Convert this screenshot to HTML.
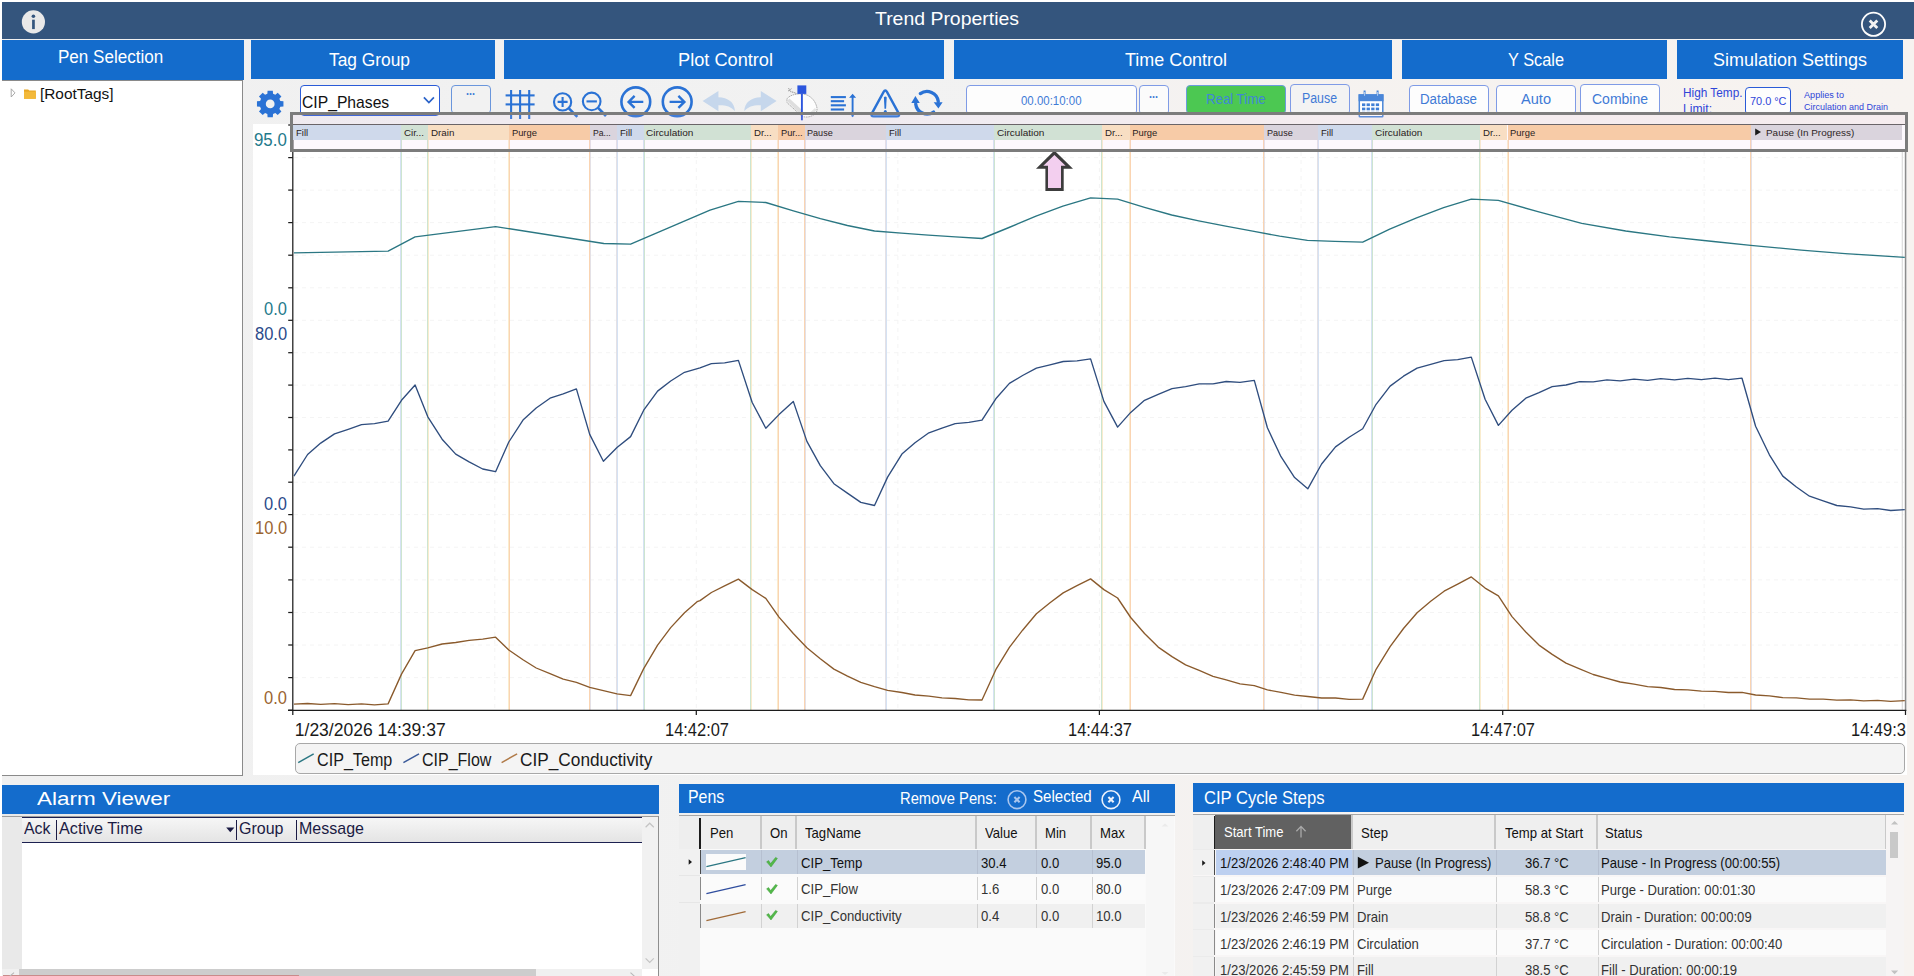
<!DOCTYPE html>
<html><head><meta charset="utf-8"><title>Trend Properties</title>
<style>
html,body{margin:0;padding:0;background:#fff;width:1914px;height:976px;overflow:hidden;}
#w{width:1914px;height:976px;position:relative;overflow:hidden;font-family:"Liberation Sans",sans-serif;background:#fff;}
.a{position:absolute;display:block;}
.t{position:absolute;white-space:pre;transform-origin:0 0;display:block;}
</style></head><body><div id="w">
<div class="a" style="left:2.00px;top:2.00px;width:1912.00px;height:974.00px;background:linear-gradient(to right,#f0f0f0 0%,#f2f2f2 55%,#f5f2f0 63%,#f7f3f0 100%);"></div>
<div class="a" style="left:2.00px;top:2.00px;width:1912.00px;height:36.60px;background:#34557d;"></div>
<span class="t" style="left:875.00px;top:9.84px;font-size:18.50px;line-height:18.50px;color:#fff;transform:scaleX(1.0503);">Trend Properties</span>
<svg class="a" style="left:20px;top:8px" width="28" height="28" viewBox="0 0 28 28"><circle cx="13.4" cy="13.9" r="11.6" fill="#e9e9e9"/><circle cx="13.4" cy="8.2" r="1.8" fill="#34557d"/><rect x="12.1" y="11.7" width="2.7" height="9.4" fill="#34557d"/></svg>
<svg class="a" style="left:1858px;top:9px" width="30" height="30" viewBox="0 0 30 30"><circle cx="15.5" cy="15.3" r="11.6" fill="none" stroke="#fdfdfd" stroke-width="1.8"/><path d="M11.7 11.5 L19.3 19.1 M19.3 11.5 L11.7 19.1" stroke="#f2f2f2" stroke-width="2.8" stroke-linecap="butt"/></svg>
<div class="a" style="left:2.00px;top:40.00px;width:242.00px;height:39.60px;background:#146ccc;"></div>
<span class="t" style="left:58.30px;top:49.49px;font-size:17.50px;line-height:17.50px;color:#fff;transform:scaleX(0.9742);">Pen Selection</span>
<div class="a" style="left:250.50px;top:40.20px;width:244.00px;height:39.10px;background:#146ccc;"></div>
<span class="t" style="left:328.50px;top:52.09px;font-size:17.50px;line-height:17.50px;color:#fff;transform:scaleX(0.9913);">Tag Group</span>
<div class="a" style="left:504.00px;top:40.20px;width:440.00px;height:39.10px;background:#146ccc;"></div>
<span class="t" style="left:678.00px;top:52.09px;font-size:17.50px;line-height:17.50px;color:#fff;transform:scaleX(1.0390);">Plot Control</span>
<div class="a" style="left:953.50px;top:40.20px;width:438.00px;height:39.10px;background:#146ccc;"></div>
<span class="t" style="left:1124.50px;top:52.09px;font-size:17.50px;line-height:17.50px;color:#fff;transform:scaleX(1.0250);">Time Control</span>
<div class="a" style="left:1401.50px;top:40.20px;width:265.00px;height:39.10px;background:#146ccc;"></div>
<span class="t" style="left:1507.50px;top:52.09px;font-size:17.50px;line-height:17.50px;color:#fff;transform:scaleX(0.9335);">Y Scale</span>
<div class="a" style="left:1676.50px;top:40.20px;width:226.00px;height:39.10px;background:#146ccc;"></div>
<span class="t" style="left:1712.50px;top:52.49px;font-size:17.50px;line-height:17.50px;color:#fff;transform:scaleX(1.0280);">Simulation Settings</span>
<div class="a" style="left:2.00px;top:79.80px;width:241.20px;height:696.70px;background:#fff;border-top:1.5px solid #8a8a8a;border-right:1.5px solid #8a8a8a;border-bottom:1.5px solid #8a8a8a;box-sizing:border-box;"></div>
<svg class="a" style="left:8px;top:86px" width="34" height="16" viewBox="0 0 34 16"><path d="M3.2 2.8 L7 6.9 L3.2 11 Z" fill="#fff" stroke="#a0a0a0" stroke-width="0.9"/><path d="M16 3.5 h4.2 l1 1 h6.6 v8.3 h-11.8 z" fill="#e8a623"/><path d="M16 5.6 h11.8 v7.2 h-11.8 z" fill="#f3b93a"/></svg>
<span class="t" style="left:40.00px;top:85.88px;font-size:15.50px;line-height:15.50px;color:#111;transform:scaleX(0.9919);">[RootTags]</span>
<div class="a" style="left:253.00px;top:124.00px;width:1654.00px;height:651.00px;background:#fff;"></div>
<svg class="a" style="left:0;top:0" width="1914" height="976" viewBox="0 0 1914 976"><g stroke="#f4f4f4" stroke-width="1" stroke-dasharray="4 4" fill="none"><path d="M294 157.6 H1904"/><path d="M294 190.1 H1904"/><path d="M294 222.6 H1904"/><path d="M294 255.2 H1904"/><path d="M294 287.8 H1904"/><path d="M294 320.3 H1904"/><path d="M294 352.7 H1904"/><path d="M294 385.1 H1904"/><path d="M294 417.5 H1904"/><path d="M294 449.9 H1904"/><path d="M294 482.2 H1904"/><path d="M294 514.6 H1904"/><path d="M294 547.2 H1904"/><path d="M294 579.9 H1904"/><path d="M294 612.5 H1904"/><path d="M294 645.0 H1904"/><path d="M294 677.6 H1904"/><path d="M494.8 152 V710"/><path d="M696.3 152 V710"/><path d="M897.9 152 V710"/><path d="M1099.4 152 V710"/><path d="M1301.0 152 V710"/><path d="M1502.5 152 V710"/><path d="M1704.1 152 V710"/></g><rect x="400" y="140" width="1" height="570" fill="#d5e2f3"/><rect x="401" y="140" width="1" height="570" fill="#cde5d0"/><rect x="427" y="140" width="1" height="570" fill="#cde5d0"/><rect x="428" y="140" width="1" height="570" fill="#faecce"/><rect x="508" y="140" width="1" height="570" fill="#faecce"/><rect x="509" y="140" width="1" height="570" fill="#fad4b2"/><rect x="589" y="140" width="1" height="570" fill="#fad4b2"/><rect x="590" y="140" width="1" height="570" fill="#e4e1e6"/><rect x="616" y="140" width="1" height="570" fill="#e4e1e6"/><rect x="617" y="140" width="1" height="570" fill="#d5e2f3"/><rect x="643" y="140" width="1" height="570" fill="#d5e2f3"/><rect x="644" y="140" width="1" height="570" fill="#cde5d0"/><rect x="750" y="140" width="1" height="570" fill="#cde5d0"/><rect x="751" y="140" width="1" height="570" fill="#faecce"/><rect x="777" y="140" width="1" height="570" fill="#faecce"/><rect x="778" y="140" width="1" height="570" fill="#fad4b2"/><rect x="804" y="140" width="1" height="570" fill="#fad4b2"/><rect x="805" y="140" width="1" height="570" fill="#e4e1e6"/><rect x="885" y="140" width="1" height="570" fill="#e4e1e6"/><rect x="886" y="140" width="1" height="570" fill="#d5e2f3"/><rect x="993" y="140" width="1" height="570" fill="#d5e2f3"/><rect x="994" y="140" width="1" height="570" fill="#cde5d0"/><rect x="1101" y="140" width="1" height="570" fill="#cde5d0"/><rect x="1102" y="140" width="1" height="570" fill="#faecce"/><rect x="1129" y="140" width="1" height="570" fill="#faecce"/><rect x="1130" y="140" width="1" height="570" fill="#fad4b2"/><rect x="1263" y="140" width="1" height="570" fill="#fad4b2"/><rect x="1264" y="140" width="1" height="570" fill="#e4e1e6"/><rect x="1317" y="140" width="1" height="570" fill="#e4e1e6"/><rect x="1318" y="140" width="1" height="570" fill="#d5e2f3"/><rect x="1371" y="140" width="1" height="570" fill="#d5e2f3"/><rect x="1372" y="140" width="1" height="570" fill="#cde5d0"/><rect x="1479" y="140" width="1" height="570" fill="#cde5d0"/><rect x="1480" y="140" width="1" height="570" fill="#faecce"/><rect x="1507" y="140" width="1" height="570" fill="#faecce"/><rect x="1508" y="140" width="1" height="570" fill="#fad4b2"/><rect x="1750" y="140" width="1" height="570" fill="#fad4b2"/><rect x="1751" y="140" width="1" height="570" fill="#e4e1e6"/><path d="M1902.3 152 V710" stroke="#dcdcdc" stroke-width="1.2"/><path d="M1905.6 150 V711" stroke="#8c8c8c" stroke-width="1.6"/><clipPath id="cp"><rect x="293.4" y="120" width="1612" height="595"/></clipPath><g clip-path="url(#cp)" fill="none" stroke-width="1.35" stroke-linejoin="round"><path stroke="#2b7783" d="M293.9 252.9 L388.1 251.2 L415.1 236.9 L495.6 226.6 L603.8 243.5 L630.6 244.2 L710.0 210.2 L738.4 201.4 L765.8 202.5 L793.4 210.8 L820.4 218.7 L847.4 225.5 L874.5 231.0 L901.4 233.2 L928.4 235.2 L955.4 236.9 L982.0 238.5 L1009.0 227.5 L1036.0 216.1 L1062.9 206.2 L1090.6 197.9 L1117.6 199.1 L1144.5 207.3 L1171.7 215.0 L1198.7 220.9 L1225.7 226.2 L1252.7 231.2 L1279.7 236.1 L1307.4 240.4 L1334.8 241.3 L1362.7 242.2 L1389.7 229.2 L1416.6 217.8 L1443.6 207.7 L1471.3 199.2 L1498.3 200.3 L1537.9 211.7 L1581.8 223.3 L1625.7 231.0 L1669.5 236.9 L1713.4 241.5 L1750.7 245.3 L1801.2 250.1 L1845.1 253.6 L1904.8 257.3"/><path stroke="#2f4d7e" d="M293.9 476.1 L307.6 454.5 L320.7 443.1 L334.5 433.9 L348.2 429.3 L361.5 424.7 L374.5 423.6 L388.1 421.2 L401.5 400.3 L415.1 385.0 L427.8 416.8 L442.1 439.2 L455.7 454.1 L469.1 461.8 L482.7 469.0 L495.6 471.7 L508.8 442.0 L523.0 420.1 L536.2 408.0 L550.0 398.2 L563.2 393.8 L576.4 388.9 L589.7 434.4 L603.4 461.3 L617.0 447.5 L630.6 436.6 L643.7 410.2 L657.6 391.1 L670.7 381.0 L684.5 372.3 L700.0 367.9 L711.4 363.7 L724.6 362.8 L738.4 360.4 L752.2 402.5 L765.8 428.2 L779.0 414.6 L793.3 401.4 L806.9 441.4 L820.3 465.7 L833.9 483.7 L847.0 492.9 L860.8 502.4 L874.5 505.5 L887.6 477.1 L901.9 454.1 L915.0 442.7 L928.9 432.8 L942.0 428.2 L955.2 423.6 L968.8 422.3 L982.0 420.1 L995.8 398.8 L1009.4 383.4 L1022.6 375.5 L1036.4 368.1 L1050.0 364.8 L1063.2 361.5 L1077.0 360.8 L1090.6 358.9 L1103.9 401.4 L1117.6 427.1 L1130.7 412.4 L1144.5 400.3 L1158.2 394.4 L1172.0 388.7 L1185.6 386.7 L1199.2 383.9 L1213.0 383.9 L1226.2 381.5 L1240.0 382.4 L1254.3 380.4 L1267.4 427.8 L1281.0 456.7 L1294.6 477.6 L1307.8 488.8 L1321.6 464.0 L1335.5 446.9 L1349.1 437.2 L1362.7 428.7 L1376.1 404.3 L1390.1 386.1 L1403.5 376.2 L1417.1 368.1 L1430.7 364.4 L1444.1 360.6 L1457.7 359.7 L1471.3 357.1 L1485.1 399.2 L1498.4 425.4 L1512.0 410.2 L1525.8 398.2 L1539.0 392.7 L1552.2 386.7 L1566.0 385.0 L1579.6 381.7 L1593.2 381.9 L1607.0 379.9 L1620.2 380.8 L1634.0 379.1 L1647.6 380.4 L1660.8 378.6 L1674.6 379.9 L1687.8 378.4 L1701.4 379.7 L1715.0 378.2 L1728.4 379.7 L1742.0 378.2 L1755.6 426.2 L1769.4 454.8 L1782.8 476.1 L1796.4 487.0 L1809.5 496.2 L1823.2 500.8 L1836.8 505.5 L1850.6 506.8 L1863.7 509.2 L1877.6 508.7 L1890.7 510.5 L1904.8 509.6"/><path stroke="#8a5a2c" d="M293.9 704.2 L307.6 703.5 L320.7 704.4 L334.5 703.7 L348.2 704.6 L361.5 703.9 L374.5 704.8 L388.1 703.9 L401.5 674.1 L415.1 650.6 L427.8 647.8 L442.1 644.0 L455.7 642.5 L469.1 640.3 L482.7 639.2 L495.6 637.2 L508.8 650.0 L523.0 659.8 L536.2 668.0 L550.0 673.7 L563.2 679.2 L576.4 682.4 L589.7 687.3 L603.4 690.6 L617.0 693.9 L630.6 695.6 L643.7 668.6 L657.6 645.1 L670.7 627.6 L684.5 612.7 L697.1 601.7 L700.0 600.6 L711.4 592.5 L724.6 585.9 L738.4 579.1 L752.2 589.6 L765.8 598.4 L779.0 617.1 L793.3 633.5 L806.9 647.8 L820.3 658.7 L833.9 669.1 L847.0 675.9 L860.8 682.4 L874.5 686.6 L887.6 690.3 L901.9 692.5 L915.0 695.0 L928.9 696.1 L942.0 697.8 L955.2 698.5 L968.8 699.8 L982.0 700.0 L995.8 669.7 L1009.4 647.3 L1022.6 630.2 L1036.4 613.8 L1050.0 602.8 L1063.2 592.9 L1077.0 585.7 L1090.6 578.9 L1103.9 589.6 L1117.6 598.0 L1130.7 617.5 L1144.5 633.5 L1158.2 647.1 L1172.0 656.6 L1185.6 664.9 L1199.2 670.4 L1213.0 676.3 L1226.2 679.8 L1240.0 683.8 L1254.3 685.7 L1267.4 689.9 L1281.0 692.3 L1294.6 695.2 L1307.8 696.5 L1321.6 698.0 L1335.5 698.0 L1349.1 699.3 L1362.7 699.1 L1376.1 669.3 L1390.1 646.7 L1403.5 628.5 L1417.1 612.7 L1430.7 601.3 L1444.1 591.2 L1457.7 584.1 L1471.3 576.9 L1485.1 588.1 L1498.4 595.8 L1512.0 616.6 L1525.8 632.0 L1539.0 645.1 L1552.2 654.4 L1566.0 663.1 L1579.6 668.8 L1593.2 674.5 L1607.0 678.3 L1620.2 682.0 L1634.0 684.2 L1647.6 686.6 L1660.8 687.5 L1674.6 689.5 L1687.8 689.9 L1701.4 691.2 L1715.0 691.4 L1728.4 692.5 L1742.0 692.3 L1755.6 695.0 L1769.4 695.8 L1782.8 697.6 L1796.4 697.8 L1809.5 699.1 L1823.2 699.1 L1836.8 700.2 L1850.6 699.8 L1863.7 700.9 L1877.6 700.4 L1890.7 701.3 L1904.8 700.7"/></g><g stroke="#1c1c1c" fill="none" stroke-width="1.25"><path d="M292.8 124 V715"/><path d="M288 710.45 H1906.2" stroke-width="1.2"/><path d="M288.2 125.0 H292.8"/><path d="M288.2 157.6 H292.8"/><path d="M288.2 190.1 H292.8"/><path d="M288.2 222.6 H292.8"/><path d="M288.2 255.2 H292.8"/><path d="M288.2 287.8 H292.8"/><path d="M288.2 320.3 H292.8"/><path d="M288.2 352.7 H292.8"/><path d="M288.2 385.1 H292.8"/><path d="M288.2 417.5 H292.8"/><path d="M288.2 449.9 H292.8"/><path d="M288.2 482.2 H292.8"/><path d="M288.2 514.6 H292.8"/><path d="M288.2 547.2 H292.8"/><path d="M288.2 579.9 H292.8"/><path d="M288.2 612.5 H292.8"/><path d="M288.2 645.0 H292.8"/><path d="M288.2 677.6 H292.8"/><path d="M288.2 710.2 H292.8"/><path d="M696.3 710 V715"/><path d="M1099.4 710 V715"/><path d="M1502.7 710 V715"/><path d="M1905.5 710 V715"/></g><path fill="#3c3c3c" d="M1054.4 150.4 L1073 168.8 H1063.7 V190.9 H1045.4 V168.8 H1036 Z"/><path fill="#f3cfef" d="M1054.4 154.9 L1065.6 165.8 H1061 V188 H1048 V165.8 H1043.3 Z"/></svg>
<span class="t" style="left:253.90px;top:131.26px;font-size:18.00px;line-height:18.00px;color:#1f7a8c;transform:scaleX(0.9362);">95.0</span>
<span class="t" style="left:264.00px;top:299.66px;font-size:18.00px;line-height:18.00px;color:#1f7a8c;transform:scaleX(0.9151);">0.0</span>
<span class="t" style="left:254.80px;top:324.56px;font-size:18.00px;line-height:18.00px;color:#2b4a8a;transform:scaleX(0.9162);">80.0</span>
<span class="t" style="left:264.00px;top:494.56px;font-size:18.00px;line-height:18.00px;color:#2b4a8a;transform:scaleX(0.9151);">0.0</span>
<span class="t" style="left:254.80px;top:518.66px;font-size:18.00px;line-height:18.00px;color:#9a6430;transform:scaleX(0.9162);">10.0</span>
<span class="t" style="left:264.00px;top:689.16px;font-size:18.00px;line-height:18.00px;color:#9a6430;transform:scaleX(0.9151);">0.0</span>
<span class="t" style="left:294.80px;top:721.59px;font-size:17.50px;line-height:17.50px;color:#1a1a1a;">1/23/2026 14:39:37</span>
<span class="t" style="left:664.50px;top:721.59px;font-size:17.50px;line-height:17.50px;color:#1a1a1a;transform:scaleX(0.9396);">14:42:07</span>
<span class="t" style="left:1067.60px;top:721.59px;font-size:17.50px;line-height:17.50px;color:#1a1a1a;transform:scaleX(0.9396);">14:44:37</span>
<span class="t" style="left:1470.70px;top:721.59px;font-size:17.50px;line-height:17.50px;color:#1a1a1a;transform:scaleX(0.9396);">14:47:07</span>
<div class="a" style="left:1840px;top:716px;width:65.5px;height:26px;overflow:hidden"><span class="t" style="left:10.50px;top:5.59px;font-size:17.50px;line-height:17.50px;color:#1a1a1a;transform:scaleX(0.9396);">14:49:37</span></div>
<div class="a" style="left:295.00px;top:742.70px;width:1610.00px;height:31.80px;background:#f4f4f4;border:1.2px solid #a8a8a8;border-radius:5px;box-sizing:border-box;"></div>
<svg class="a" style="left:295px;top:748px" width="240" height="20" viewBox="295 748 240 20"><path d="M298.2 762.6 L313.7 753.8" stroke="#2b7783" stroke-width="1.5"/><path d="M403.4 762.6 L419 753.8" stroke="#3a5a9a" stroke-width="1.5"/><path d="M501.6 762.6 L517.1 753.8" stroke="#b07a48" stroke-width="1.5"/></svg>
<span class="t" style="left:316.80px;top:751.59px;font-size:17.50px;line-height:17.50px;color:#1a1a1a;transform:scaleX(0.9217);">CIP_Temp</span>
<span class="t" style="left:421.80px;top:751.59px;font-size:17.50px;line-height:17.50px;color:#1a1a1a;transform:scaleX(0.9149);">CIP_Flow</span>
<span class="t" style="left:520.00px;top:751.59px;font-size:17.50px;line-height:17.50px;color:#1a1a1a;transform:scaleX(0.9857);">CIP_Conductivity</span>
<svg class="a" style="left:254px;top:88px" width="32" height="32" viewBox="254 88 32 32"><path fill-rule="evenodd" fill="#2a72d5" d="M267.35 93.79 L267.57 90.66 L272.83 90.66 L273.05 93.79 L275.33 94.74 L277.70 92.68 L281.42 96.40 L279.36 98.77 L280.31 101.05 L283.44 101.27 L283.44 106.53 L280.31 106.75 L279.36 109.03 L281.42 111.40 L277.70 115.12 L275.33 113.06 L273.05 114.01 L272.83 117.14 L267.57 117.14 L267.35 114.01 L265.07 113.06 L262.70 115.12 L258.98 111.40 L261.04 109.03 L260.09 106.75 L256.96 106.53 L256.96 101.27 L260.09 101.05 L261.04 98.77 L258.98 96.40 L262.70 92.68 L265.07 94.74Z M265.80 103.90 a4.40 4.40 0 1 0 8.80 0 a4.40 4.40 0 1 0 -8.80 0Z"/></svg>
<div class="a" style="left:300.00px;top:85.00px;width:140.00px;height:31.00px;background:#fff;border:1.5px solid #2a5bd7;border-radius:4px;box-sizing:border-box;"></div>
<span class="t" style="left:302.10px;top:93.71px;font-size:17.00px;line-height:17.00px;color:#111;transform:scaleX(0.9228);">CIP_Phases</span>
<svg class="a" style="left:420px;top:93px" width="18" height="14" viewBox="0 0 18 14"><path d="M3.9 4.4 L8.9 9.6 L13.9 4.4" fill="none" stroke="#2b63c9" stroke-width="1.7"/></svg>
<div class="a" style="left:451.00px;top:84.50px;width:39.50px;height:29.50px;background:#f2f2f2;border:1.3px solid #6a96dc;border-radius:4px;box-sizing:border-box;"></div>
<span class="t" style="left:465.50px;top:85.44px;font-size:12.00px;line-height:12.00px;color:#3f7ad6;font-weight:bold;transform:scaleX(0.8998);">...</span>
<svg class="a" style="left:495px;top:80px" width="460" height="45" viewBox="495 80 460 45"><g stroke="#2a72d5" fill="none" stroke-width="2.1"><path d="M511.1 90 V119"/><path d="M520.1 90 V119"/><path d="M529.2 90 V119"/><path d="M505.6 95.4 H534.6"/><path d="M505.6 104.4 H534.6"/></g><g stroke="#2a72d5" fill="none" stroke-width="2.1"><circle cx="562.6" cy="101.9" r="8.6"/><path d="M557.6 101.9 H567.6 M562.6 96.9 V106.9"/><path d="M568.9 108.3 L577.3 116.8" stroke-width="2.6"/></g><g stroke="#2a72d5" fill="none" stroke-width="2.1"><circle cx="591.7" cy="101.4" r="8.8"/><path d="M586.5 101.4 H596.9"/><path d="M598.1 107.8 L606 116" stroke-width="2.6"/></g><g stroke="#2a72d5" fill="none" stroke-width="2.6"><circle cx="635.8" cy="101.8" r="14.4"/><path d="M628.6 101.9 H643.3 M634.6 95.9 L628.6 101.9 L634.6 107.9" stroke-width="2.4"/></g><g stroke="#2a72d5" fill="none" stroke-width="2.6"><circle cx="677.2" cy="101.8" r="14.4"/><path d="M669.6 101.9 H684.4 M678.4 95.9 L684.4 101.9 L678.4 107.9" stroke-width="2.4"/></g><path fill="#c6d7ec" d="M702.6 101 L718.4 91 V97.2 C728 97.5 734.5 102 735 111.2 C731 106.4 726 105 718.4 105.2 V111.2 Z"/><path fill="#c6d7ec" d="M776.6 101 L760.8 91 V97.2 C751.2 97.5 744.7 102 744.2 111.2 C748.2 106.4 753.2 105 760.8 105.2 V111.2 Z"/><g><path d="M787 98.8 C790 94.8 797 93.4 803 94 C810 94.8 815.4 100.6 816.8 107.2 C817.4 110.4 816.8 112.6 814.6 114.2 C811.4 116.8 806.5 117.8 802.4 116.4 L799 113.6 L787 102.6 Z" fill="#fdfdfd" stroke="#8a8a8a" stroke-width="0.7" stroke-dasharray="1.6 0.7"/><path d="M787 101 L789.4 98.6 L802.6 110.6 L800.2 114.4 Z" fill="#dedede"/><path d="M810 112.5 L815 108 L816.4 110.2 L812 115 Z" fill="#e4e4e4"/><path d="M788.6 88.2 L790.4 91.6 C792.4 92 794.6 92.6 796.4 93.6 M788.2 91 L791.6 88.6" stroke="#666" fill="none" stroke-width="0.7" stroke-dasharray="1.2 0.6"/><rect x="797.4" y="85.4" width="8.9" height="8.5" fill="#2c56dd"/><path d="M801.9 93.8 V120.3" stroke="#2c56dd" stroke-width="1.9"/></g><g stroke="#2a72d5" fill="none" stroke-width="2.1"><path d="M830.8 97.1 H845.9"/><path d="M830.8 101.2 H844.1"/><path d="M830.8 105.3 H845.9"/><path d="M830.8 109.5 H844.1"/><path d="M852.6 96 V116.2" stroke-width="1.9"/></g><path fill="#2a72d5" d="M849.1 97.8 L852.6 93.7 L856.1 97.8 Z M851 115.4 L852.6 117.2 L854.2 115.4 Z"/><path fill="none" stroke="#2a72d5" stroke-width="2.4" d="M883.5 92.1 Q885.3 88.9 887.1 92.1 L898.7 113.4 Q900.1 116.4 896.8 116.4 H873.8 Q870.5 116.4 871.9 113.4 Z"/><path fill="#2a72d5" d="M883.9 97.2 Q885.3 96 886.7 97.2 L886.1 108.8 H884.5 Z"/><circle cx="885.3" cy="111.5" r="1.5" fill="#2a72d5"/><g stroke="#2a72d5" fill="none" stroke-width="3.3" stroke-linecap="round"><path d="M920.3 93.6 A11.4 11.4 0 0 1 938.3 101.5" /><path d="M933.6 112 A11.4 11.4 0 0 1 915.7 104"/></g><path fill="#2a72d5" d="M933.7 102.3 H942.6 L938.4 108.4 Z M911.3 102.9 H919.8 L915.4 96 Z"/></svg>
<div class="a" style="left:965.50px;top:84.50px;width:171.50px;height:30.50px;background:#fdfdfd;border:1.3px solid #7f9be6;border-radius:4px;box-sizing:border-box;"></div><span class="t" style="left:1021.00px;top:94.64px;font-size:12.00px;line-height:12.00px;color:#3f7ad6;transform:scaleX(0.9544);">00.00:10:00</span>
<div class="a" style="left:1139.00px;top:84.50px;width:29.50px;height:30.50px;background:#fbfbfb;border:1.3px solid #7f9be6;border-radius:4px;box-sizing:border-box;"></div>
<span class="t" style="left:1149.00px;top:88.44px;font-size:12.00px;line-height:12.00px;color:#3f7ad6;font-weight:bold;transform:scaleX(0.8998);">...</span>
<div class="a" style="left:1186.00px;top:84.50px;width:100.00px;height:29.50px;background:#4cc852;border:1.3px solid #6a9cdc;border-radius:4px;box-sizing:border-box;"></div><span class="t" style="left:1206.25px;top:92.13px;font-size:14.50px;line-height:14.50px;color:#3f86d8;transform:scaleX(0.9116);">Real Time</span>
<div class="a" style="left:1289.50px;top:84.00px;width:60.00px;height:30.80px;background:#f3f3f3;border:1.3px solid #7f9be6;border-radius:4px;box-sizing:border-box;"></div><span class="t" style="left:1302.00px;top:91.45px;font-size:14.00px;line-height:14.00px;color:#3f7ad6;transform:scaleX(0.8816);">Pause</span>
<svg class="a" style="left:1356px;top:88px" width="30" height="32" viewBox="1356 88 30 32"><path d="M1359.3 95 H1382.8 V116.2 Q1382.8 116.8 1382.2 116.8 H1359.9 Q1359.3 116.8 1359.3 116.2 Z" fill="#fff" stroke="#4a86d8" stroke-width="1.5"/><path d="M1358.6 94.3 H1383.5 V101.2 H1358.6 Z" fill="#4a86d8"/><path d="M1364.6 90.6 V96.6 M1377.6 90.6 V96.6" stroke="#4a86d8" stroke-width="2" /><path d="M1364.6 92 V95.8 M1377.6 92 V95.8" stroke="#fff" stroke-width="0.6"/><rect x="1362.0" y="103.4" width="3.3" height="2.7" fill="#3f7fd6"/><rect x="1366.6" y="103.4" width="3.3" height="2.7" fill="#3f7fd6"/><rect x="1371.2" y="103.4" width="3.3" height="2.7" fill="#3f7fd6"/><rect x="1375.8" y="103.4" width="3.3" height="2.7" fill="#3f7fd6"/><rect x="1362.0" y="107.6" width="3.3" height="2.7" fill="#3f7fd6"/><rect x="1366.6" y="107.6" width="3.3" height="2.7" fill="#3f7fd6"/><rect x="1371.2" y="107.6" width="3.3" height="2.7" fill="#3f7fd6"/><rect x="1375.8" y="107.6" width="3.3" height="2.7" fill="#3f7fd6"/><rect x="1362.0" y="111.8" width="3.3" height="2.7" fill="#3f7fd6"/><rect x="1366.6" y="111.8" width="3.3" height="2.7" fill="#3f7fd6"/><rect x="1371.2" y="111.8" width="3.3" height="2.7" fill="#3f7fd6"/><rect x="1375.8" y="111.8" width="3.3" height="2.7" fill="#3f7fd6"/></svg>
<div class="a" style="left:1408.50px;top:85.00px;width:80.00px;height:30.00px;background:#fdfdfd;border:1.3px solid #7f9be6;border-radius:4px;box-sizing:border-box;"></div><span class="t" style="left:1420.00px;top:91.75px;font-size:14.00px;line-height:14.00px;color:#3f7ad6;transform:scaleX(0.9510);">Database</span>
<div class="a" style="left:1495.50px;top:85.00px;width:80.00px;height:30.00px;background:#fdfdfd;border:1.3px solid #7f9be6;border-radius:4px;box-sizing:border-box;"></div><span class="t" style="left:1520.50px;top:91.75px;font-size:14.00px;line-height:14.00px;color:#3f7ad6;transform:scaleX(1.0416);">Auto</span>
<div class="a" style="left:1580.00px;top:84.00px;width:80.00px;height:31.00px;background:#fdfdfd;border:1.3px solid #7f9be6;border-radius:4px;box-sizing:border-box;"></div><span class="t" style="left:1592.00px;top:91.75px;font-size:14.00px;line-height:14.00px;color:#3f7ad6;">Combine</span>
<span class="t" style="left:1682.80px;top:86.82px;font-size:12.50px;line-height:12.50px;color:#2f45d8;transform:scaleX(0.9446);">High Temp.</span>
<span class="t" style="left:1682.80px;top:102.72px;font-size:12.50px;line-height:12.50px;color:#2f45d8;transform:scaleX(0.9711);">Limit:</span>
<div class="a" style="left:1745.00px;top:86.50px;width:46.00px;height:28.00px;background:#fdfdfd;border:1.4px solid #2a5bd7;border-radius:4px;box-sizing:border-box;"></div>
<span class="t" style="left:1750.00px;top:95.77px;font-size:11.50px;line-height:11.50px;color:#2f45d8;transform:scaleX(0.9484);">70.0 °C</span>
<span class="t" style="left:1803.80px;top:91.21px;font-size:9.20px;line-height:9.20px;color:#2f45d8;transform:scaleX(0.9900);">Applies to</span>
<span class="t" style="left:1803.80px;top:102.81px;font-size:9.20px;line-height:9.20px;color:#2f45d8;transform:scaleX(0.9778);">Circulation and Drain</span>
<div class="a" style="left:290.00px;top:112.00px;width:1618.00px;height:39.70px;background:rgba(235,200,240,0.12);border:3px solid #7c7c7c;box-sizing:border-box;"></div>
<div class="a" style="left:293.00px;top:123.90px;width:1612.00px;height:1.10px;background:#6a6468;"></div>
<div class="a" style="left:293.00px;top:125.00px;width:108.30px;height:15.00px;background:#cdd8ea;opacity:0.97;"></div>
<span class="t" style="left:295.60px;top:127.94px;font-size:9.40px;line-height:9.40px;color:#2a2222;transform:scaleX(1.0163);">Fill</span>
<div class="a" style="left:401.30px;top:125.00px;width:26.70px;height:15.00px;background:#cfe0d3;opacity:0.97;"></div>
<span class="t" style="left:403.90px;top:127.94px;font-size:9.40px;line-height:9.40px;color:#2a2222;transform:scaleX(1.0350);">Cir...</span>
<div class="a" style="left:428.00px;top:125.00px;width:81.30px;height:15.00px;background:#f8ddc1;opacity:0.97;"></div>
<span class="t" style="left:430.60px;top:127.94px;font-size:9.40px;line-height:9.40px;color:#2a2222;transform:scaleX(1.0418);">Drain</span>
<div class="a" style="left:509.30px;top:125.00px;width:80.70px;height:15.00px;background:#f7c9a4;opacity:0.97;"></div>
<span class="t" style="left:511.90px;top:127.94px;font-size:9.40px;line-height:9.40px;color:#2a2222;">Purge</span>
<div class="a" style="left:590.00px;top:125.00px;width:27.00px;height:15.00px;background:#d9d3dc;opacity:0.97;"></div>
<span class="t" style="left:592.60px;top:127.94px;font-size:9.40px;line-height:9.40px;color:#2a2222;transform:scaleX(0.9205);">Pa...</span>
<div class="a" style="left:617.00px;top:125.00px;width:26.70px;height:15.00px;background:#cdd8ea;opacity:0.97;"></div>
<span class="t" style="left:619.60px;top:127.94px;font-size:9.40px;line-height:9.40px;color:#2a2222;transform:scaleX(1.0163);">Fill</span>
<div class="a" style="left:643.70px;top:125.00px;width:107.20px;height:15.00px;background:#cfe0d3;opacity:0.97;"></div>
<span class="t" style="left:646.30px;top:127.94px;font-size:9.40px;line-height:9.40px;color:#2a2222;transform:scaleX(1.0696);">Circulation</span>
<div class="a" style="left:750.90px;top:125.00px;width:27.00px;height:15.00px;background:#f8ddc1;opacity:0.97;"></div>
<span class="t" style="left:753.50px;top:127.94px;font-size:9.40px;line-height:9.40px;color:#2a2222;transform:scaleX(1.0270);">Dr...</span>
<div class="a" style="left:777.90px;top:125.00px;width:26.80px;height:15.00px;background:#f7c9a4;opacity:0.97;"></div>
<span class="t" style="left:780.50px;top:127.94px;font-size:9.40px;line-height:9.40px;color:#2a2222;transform:scaleX(0.9887);">Pur...</span>
<div class="a" style="left:804.70px;top:125.00px;width:81.20px;height:15.00px;background:#d9d3dc;opacity:0.97;"></div>
<span class="t" style="left:807.30px;top:127.94px;font-size:9.40px;line-height:9.40px;color:#2a2222;transform:scaleX(0.9679);">Pause</span>
<div class="a" style="left:885.90px;top:125.00px;width:108.20px;height:15.00px;background:#cdd8ea;opacity:0.97;"></div>
<span class="t" style="left:888.50px;top:127.94px;font-size:9.40px;line-height:9.40px;color:#2a2222;transform:scaleX(1.0163);">Fill</span>
<div class="a" style="left:994.10px;top:125.00px;width:108.10px;height:15.00px;background:#cfe0d3;opacity:0.97;"></div>
<span class="t" style="left:996.70px;top:127.94px;font-size:9.40px;line-height:9.40px;color:#2a2222;transform:scaleX(1.0696);">Circulation</span>
<div class="a" style="left:1102.20px;top:125.00px;width:27.40px;height:15.00px;background:#f8ddc1;opacity:0.97;"></div>
<span class="t" style="left:1104.80px;top:127.94px;font-size:9.40px;line-height:9.40px;color:#2a2222;transform:scaleX(1.0270);">Dr...</span>
<div class="a" style="left:1129.60px;top:125.00px;width:134.50px;height:15.00px;background:#f7c9a4;opacity:0.97;"></div>
<span class="t" style="left:1132.20px;top:127.94px;font-size:9.40px;line-height:9.40px;color:#2a2222;">Purge</span>
<div class="a" style="left:1264.10px;top:125.00px;width:53.80px;height:15.00px;background:#d9d3dc;opacity:0.97;"></div>
<span class="t" style="left:1266.70px;top:127.94px;font-size:9.40px;line-height:9.40px;color:#2a2222;transform:scaleX(0.9679);">Pause</span>
<div class="a" style="left:1317.90px;top:125.00px;width:54.20px;height:15.00px;background:#cdd8ea;opacity:0.97;"></div>
<span class="t" style="left:1320.50px;top:127.94px;font-size:9.40px;line-height:9.40px;color:#2a2222;transform:scaleX(1.0163);">Fill</span>
<div class="a" style="left:1372.10px;top:125.00px;width:108.20px;height:15.00px;background:#cfe0d3;opacity:0.97;"></div>
<span class="t" style="left:1374.70px;top:127.94px;font-size:9.40px;line-height:9.40px;color:#2a2222;transform:scaleX(1.0696);">Circulation</span>
<div class="a" style="left:1480.30px;top:125.00px;width:27.20px;height:15.00px;background:#f8ddc1;opacity:0.97;"></div>
<span class="t" style="left:1482.90px;top:127.94px;font-size:9.40px;line-height:9.40px;color:#2a2222;transform:scaleX(1.0270);">Dr...</span>
<div class="a" style="left:1507.50px;top:125.00px;width:243.20px;height:15.00px;background:#f7c9a4;opacity:0.97;"></div>
<span class="t" style="left:1510.10px;top:127.94px;font-size:9.40px;line-height:9.40px;color:#2a2222;">Purge</span>
<div class="a" style="left:1750.70px;top:125.00px;width:151.30px;height:15.00px;background:#d9d3dc;opacity:0.97;"></div>
<svg class="a" style="left:1754px;top:127px" width="10" height="10" viewBox="0 0 10 10"><path d="M1.2 1.4 L7 4.9 L1.2 8.4 Z" fill="#1a1a1a"/></svg>
<span class="t" style="left:1765.50px;top:127.94px;font-size:9.40px;line-height:9.40px;color:#2e2626;transform:scaleX(1.0586);">Pause (In Progress)</span>
<div class="a" style="left:2.00px;top:785.00px;width:656.50px;height:28.50px;background:#146ccc;"></div>
<span class="t" style="left:36.90px;top:791.10px;font-size:17.60px;line-height:17.60px;color:#fff;transform:scaleX(1.2767);">Alarm Viewer</span>
<div class="a" style="left:2.00px;top:814.00px;width:656.50px;height:162.00px;background:#e9e9e9;"></div>
<div class="a" style="left:22.00px;top:817.00px;width:619.50px;height:152.00px;background:#fff;"></div>
<div class="a" style="left:22.00px;top:817.00px;width:619.50px;height:25.50px;background:linear-gradient(#f6f6f6,#e4e4e4);border-top:1.6px solid #1c2050;border-bottom:1.6px solid #1c2050;box-sizing:border-box;"></div>
<span class="t" style="left:24.00px;top:820.09px;font-size:16.20px;line-height:16.20px;color:#1b1b44;transform:scaleX(0.9813);">Ack</span>
<span class="t" style="left:59.00px;top:820.09px;font-size:16.20px;line-height:16.20px;color:#1b1b44;">Active Time</span>
<span class="t" style="left:239.40px;top:820.09px;font-size:16.20px;line-height:16.20px;color:#1b1b44;transform:scaleX(0.9883);">Group</span>
<span class="t" style="left:299.20px;top:820.09px;font-size:16.20px;line-height:16.20px;color:#1b1b44;transform:scaleX(0.9889);">Message</span>
<div class="a" style="left:55.90px;top:819.70px;width:1.40px;height:20.00px;background:#1b1b44;"></div>
<div class="a" style="left:236.00px;top:819.70px;width:1.40px;height:20.00px;background:#1b1b44;"></div>
<div class="a" style="left:295.90px;top:819.70px;width:1.40px;height:20.00px;background:#1b1b44;"></div>
<svg class="a" style="left:225px;top:825px" width="12" height="10" viewBox="0 0 12 10"><path d="M1.2 2.6 H9.4 L5.3 7.2 Z" fill="#1b1b44"/></svg>
<div class="a" style="left:641.50px;top:817.00px;width:16.50px;height:152.00px;background:#f1f1f1;"></div>
<svg class="a" style="left:641px;top:817px" width="18" height="152" viewBox="0 0 18 152"><path d="M4.6 10.2 L8.7 6.2 L12.8 10.2 M4.6 141.4 L8.7 145.4 L12.8 141.4" fill="none" stroke="#c4c4c4" stroke-width="1.2"/></svg>
<div class="a" style="left:2.00px;top:815.90px;width:657.00px;height:1.00px;background:#9c9c9c;"></div>
<div class="a" style="left:658.00px;top:815.90px;width:1.00px;height:160.10px;background:#8e8e8e;"></div>
<div class="a" style="left:2.00px;top:968.80px;width:639.50px;height:7.20px;background:#f0f0f0;"></div>
<div class="a" style="left:641.50px;top:968.80px;width:16.50px;height:7.20px;background:#fff;"></div>
<div class="a" style="left:19.00px;top:968.80px;width:516.50px;height:7.20px;background:#cdcdcd;"></div>
<div class="a" style="left:3.00px;top:974.60px;width:296.00px;height:1.40px;background:#c98a8a;"></div>
<svg class="a" style="left:2px;top:966px" width="660" height="10" viewBox="0 0 660 10"><path d="M12 6.6 L7.6 10.4 M628.5 6.6 L632.6 10.4" fill="none" stroke="#b8b8b8" stroke-width="1.1"/></svg>
<div class="a" style="left:678.50px;top:784.00px;width:496.00px;height:29.00px;background:#146ccc;"></div>
<span class="t" style="left:688.20px;top:787.82px;font-size:18.40px;line-height:18.40px;color:#fff;transform:scaleX(0.8632);">Pens</span>
<span class="t" style="left:899.80px;top:790.83px;font-size:15.80px;line-height:15.80px;color:#fff;transform:scaleX(0.9341);">Remove Pens:</span>
<span class="t" style="left:1032.50px;top:788.83px;font-size:15.80px;line-height:15.80px;color:#fff;transform:scaleX(0.9546);">Selected</span>
<span class="t" style="left:1131.80px;top:788.83px;font-size:15.80px;line-height:15.80px;color:#fff;transform:scaleX(1.0136);">All</span>
<svg class="a" style="left:1005.9px;top:788.5px" width="22" height="22" viewBox="0 0 22 22"><circle cx="11" cy="10.7" r="8.9" fill="none" stroke="#a9c6ee" stroke-width="1.6"/><path d="M8.4 8.1 L13.6 13.3 M13.6 8.1 L8.4 13.3" stroke="#a9c6ee" stroke-width="2.1"/></svg>
<svg class="a" style="left:1099.6px;top:788.5px" width="22" height="22" viewBox="0 0 22 22"><circle cx="11" cy="10.7" r="8.9" fill="none" stroke="#eaf1fc" stroke-width="1.6"/><path d="M8.4 8.1 L13.6 13.3 M13.6 8.1 L8.4 13.3" stroke="#eaf1fc" stroke-width="2.1"/></svg>
<div class="a" style="left:678.50px;top:813.00px;width:496.00px;height:163.00px;background:#fafafa;"></div>
<div class="a" style="left:678.50px;top:813.00px;width:496.00px;height:3.20px;background:#f0f0f0;"></div>
<div class="a" style="left:679.00px;top:816.30px;width:21.00px;height:160.00px;background:#f1f1f1;"></div>
<div class="a" style="left:679.00px;top:816.30px;width:466.30px;height:32.70px;background:#eeeeee;"></div>
<div class="a" style="left:679.00px;top:815.00px;width:495.50px;height:1.20px;background:#a6a6a6;"></div>
<div class="a" style="left:699.40px;top:817.50px;width:1.20px;height:31.00px;background:#1c1c1c;"></div>
<div class="a" style="left:759.80px;top:816.30px;width:1.80px;height:32.70px;background:#c9c9c9;"></div>
<div class="a" style="left:795.10px;top:816.30px;width:1.80px;height:32.70px;background:#c9c9c9;"></div>
<div class="a" style="left:975.10px;top:816.30px;width:1.80px;height:32.70px;background:#c9c9c9;"></div>
<div class="a" style="left:1034.90px;top:816.30px;width:1.80px;height:32.70px;background:#c9c9c9;"></div>
<div class="a" style="left:1090.00px;top:816.30px;width:1.80px;height:32.70px;background:#c9c9c9;"></div>
<div class="a" style="left:1144.40px;top:816.30px;width:1.80px;height:32.70px;background:#c9c9c9;"></div>
<span class="t" style="left:710.20px;top:825.20px;font-size:15.00px;line-height:15.00px;color:#111;transform:scaleX(0.8750);">Pen</span>
<span class="t" style="left:770.00px;top:825.20px;font-size:15.00px;line-height:15.00px;color:#111;transform:scaleX(0.8750);">On</span>
<span class="t" style="left:805.30px;top:825.20px;font-size:15.00px;line-height:15.00px;color:#111;transform:scaleX(0.8750);">TagName</span>
<span class="t" style="left:984.50px;top:825.20px;font-size:15.00px;line-height:15.00px;color:#111;transform:scaleX(0.8750);">Value</span>
<span class="t" style="left:1045.20px;top:825.20px;font-size:15.00px;line-height:15.00px;color:#111;transform:scaleX(0.8750);">Min</span>
<span class="t" style="left:1100.20px;top:825.20px;font-size:15.00px;line-height:15.00px;color:#111;transform:scaleX(0.8750);">Max</span>
<div class="a" style="left:700.50px;top:850.20px;width:444.80px;height:23.80px;background:#c3cfdf;"></div>
<div class="a" style="left:761.30px;top:850.20px;width:1.10px;height:23.80px;background:#b6c0d1;"></div>
<div class="a" style="left:796.60px;top:850.20px;width:1.10px;height:23.80px;background:#b6c0d1;"></div>
<div class="a" style="left:976.60px;top:850.20px;width:1.10px;height:23.80px;background:#b6c0d1;"></div>
<div class="a" style="left:1036.40px;top:850.20px;width:1.10px;height:23.80px;background:#b6c0d1;"></div>
<div class="a" style="left:1091.50px;top:850.20px;width:1.10px;height:23.80px;background:#b6c0d1;"></div>
<div class="a" style="left:699.60px;top:850.20px;width:1.20px;height:23.80px;background:#4a4a4a;"></div>
<div class="a" style="left:705.70px;top:854.20px;width:40.30px;height:15.80px;background:#fbfbfb;"></div>
<svg class="a" style="left:705px;top:850.2px" width="42" height="24" viewBox="0 0 42 24"><path d="M1.4 16.6 L40.6 7.6" stroke="#2b7783" stroke-width="1.3"/></svg>
<svg class="a" style="left:764px;top:853.8px" width="16" height="16" viewBox="0 0 16 16"><path d="M2.6 7.8 L4.6 6.6 L6.6 9.6 L11.6 3.4 L13.4 4.4 L7 13 Z" fill="#52b948" stroke="#3f9c3a" stroke-width="0.5"/></svg>
<span class="t" style="left:800.90px;top:854.60px;font-size:15.00px;line-height:15.00px;color:#111;transform:scaleX(0.8750);">CIP_Temp</span>
<span class="t" style="left:981.00px;top:854.60px;font-size:15.00px;line-height:15.00px;color:#111;transform:scaleX(0.8750);">30.4</span>
<span class="t" style="left:1040.60px;top:854.60px;font-size:15.00px;line-height:15.00px;color:#111;transform:scaleX(0.8750);">0.0</span>
<span class="t" style="left:1096.00px;top:854.60px;font-size:15.00px;line-height:15.00px;color:#111;transform:scaleX(0.8750);">95.0</span>
<div class="a" style="left:700.50px;top:876.90px;width:444.80px;height:23.60px;background:#fbfbfb;"></div>
<div class="a" style="left:679.00px;top:875.30px;width:21.00px;height:1.20px;background:#e6e6e6;"></div>
<div class="a" style="left:761.30px;top:876.90px;width:1.10px;height:23.60px;background:#d2d2d2;"></div>
<div class="a" style="left:796.60px;top:876.90px;width:1.10px;height:23.60px;background:#d2d2d2;"></div>
<div class="a" style="left:976.60px;top:876.90px;width:1.10px;height:23.60px;background:#d2d2d2;"></div>
<div class="a" style="left:1036.40px;top:876.90px;width:1.10px;height:23.60px;background:#d2d2d2;"></div>
<div class="a" style="left:1091.50px;top:876.90px;width:1.10px;height:23.60px;background:#d2d2d2;"></div>
<div class="a" style="left:699.60px;top:876.90px;width:1.20px;height:23.60px;background:#8a8a8a;"></div>
<div class="a" style="left:705.70px;top:880.90px;width:40.30px;height:15.60px;background:#fbfbfb;"></div>
<svg class="a" style="left:705px;top:876.9px" width="42" height="24" viewBox="0 0 42 24"><path d="M1.4 16.6 L40.6 7.6" stroke="#2f4d9e" stroke-width="1.3"/></svg>
<svg class="a" style="left:764px;top:880.5px" width="16" height="16" viewBox="0 0 16 16"><path d="M2.6 7.8 L4.6 6.6 L6.6 9.6 L11.6 3.4 L13.4 4.4 L7 13 Z" fill="#52b948" stroke="#3f9c3a" stroke-width="0.5"/></svg>
<span class="t" style="left:800.90px;top:881.30px;font-size:15.00px;line-height:15.00px;color:#333;transform:scaleX(0.8750);">CIP_Flow</span>
<span class="t" style="left:981.00px;top:881.30px;font-size:15.00px;line-height:15.00px;color:#333;transform:scaleX(0.8750);">1.6</span>
<span class="t" style="left:1040.60px;top:881.30px;font-size:15.00px;line-height:15.00px;color:#333;transform:scaleX(0.8750);">0.0</span>
<span class="t" style="left:1096.00px;top:881.30px;font-size:15.00px;line-height:15.00px;color:#333;transform:scaleX(0.8750);">80.0</span>
<div class="a" style="left:700.50px;top:903.60px;width:444.80px;height:24.20px;background:#f0f0f0;"></div>
<div class="a" style="left:679.00px;top:902.00px;width:21.00px;height:1.20px;background:#e6e6e6;"></div>
<div class="a" style="left:761.30px;top:903.60px;width:1.10px;height:24.20px;background:#d2d2d2;"></div>
<div class="a" style="left:796.60px;top:903.60px;width:1.10px;height:24.20px;background:#d2d2d2;"></div>
<div class="a" style="left:976.60px;top:903.60px;width:1.10px;height:24.20px;background:#d2d2d2;"></div>
<div class="a" style="left:1036.40px;top:903.60px;width:1.10px;height:24.20px;background:#d2d2d2;"></div>
<div class="a" style="left:1091.50px;top:903.60px;width:1.10px;height:24.20px;background:#d2d2d2;"></div>
<div class="a" style="left:699.60px;top:903.60px;width:1.20px;height:24.20px;background:#8a8a8a;"></div>
<div class="a" style="left:705.70px;top:907.60px;width:40.30px;height:16.20px;background:#f0f0f0;"></div>
<svg class="a" style="left:705px;top:903.6px" width="42" height="24" viewBox="0 0 42 24"><path d="M1.4 16.6 L40.6 7.6" stroke="#a06a38" stroke-width="1.3"/></svg>
<svg class="a" style="left:764px;top:907.2px" width="16" height="16" viewBox="0 0 16 16"><path d="M2.6 7.8 L4.6 6.6 L6.6 9.6 L11.6 3.4 L13.4 4.4 L7 13 Z" fill="#52b948" stroke="#3f9c3a" stroke-width="0.5"/></svg>
<span class="t" style="left:800.90px;top:908.00px;font-size:15.00px;line-height:15.00px;color:#333;transform:scaleX(0.8750);">CIP_Conductivity</span>
<span class="t" style="left:981.00px;top:908.00px;font-size:15.00px;line-height:15.00px;color:#333;transform:scaleX(0.8750);">0.4</span>
<span class="t" style="left:1040.60px;top:908.00px;font-size:15.00px;line-height:15.00px;color:#333;transform:scaleX(0.8750);">0.0</span>
<span class="t" style="left:1096.00px;top:908.00px;font-size:15.00px;line-height:15.00px;color:#333;transform:scaleX(0.8750);">10.0</span>
<svg class="a" style="left:684px;top:856px" width="10" height="12" viewBox="0 0 10 12"><path d="M4.7 3.2 L8 6 L4.7 8.8 Z" fill="#1a1a1a"/></svg>
<div class="a" style="left:1146.20px;top:816.30px;width:28.30px;height:160.00px;background:#f7f7f7;"></div>
<svg class="a" style="left:1158px;top:820px" width="14" height="156" viewBox="0 0 14 156"><path d="M3.6 6.6 L7 3.6 L10.4 6.6 Z M3.6 152 L7 155 L10.4 152 Z" fill="#ebebeb"/></svg>
<div class="a" style="left:1193.00px;top:783.00px;width:711.20px;height:29.20px;background:#146ccc;"></div>
<span class="t" style="left:1204.20px;top:789.50px;font-size:17.60px;line-height:17.60px;color:#fff;transform:scaleX(0.9428);">CIP Cycle Steps</span>
<div class="a" style="left:1192.70px;top:812.50px;width:711.50px;height:163.50px;background:#f8f6f6;"></div>
<div class="a" style="left:1192.70px;top:813.90px;width:711.50px;height:1.20px;background:#a6a6a6;"></div>
<div class="a" style="left:1192.70px;top:814.50px;width:693.00px;height:34.50px;background:#efefef;"></div>
<div class="a" style="left:1214.50px;top:814.50px;width:137.30px;height:34.50px;background:#616161;"></div>
<div class="a" style="left:1213.60px;top:815.50px;width:1.60px;height:33.00px;background:#1c1c1c;"></div>
<span class="t" style="left:1223.60px;top:823.70px;font-size:15.00px;line-height:15.00px;color:#fff;transform:scaleX(0.8700);">Start Time</span>
<svg class="a" style="left:1293px;top:824px" width="16" height="16" viewBox="0 0 16 16"><path d="M8 13.6 V2.6 M3.4 7.2 L8 2.4 L12.6 7.2" fill="none" stroke="#a9a9a9" stroke-width="1.3"/></svg>
<div class="a" style="left:1350.90px;top:814.50px;width:1.80px;height:34.50px;background:#c9c9c9;"></div>
<div class="a" style="left:1494.30px;top:814.50px;width:1.80px;height:34.50px;background:#c9c9c9;"></div>
<div class="a" style="left:1596.30px;top:814.50px;width:1.80px;height:34.50px;background:#c9c9c9;"></div>
<div class="a" style="left:1884.60px;top:814.50px;width:1.80px;height:34.50px;background:#c9c9c9;"></div>
<span class="t" style="left:1360.80px;top:825.00px;font-size:15.00px;line-height:15.00px;color:#111;transform:scaleX(0.8750);">Step</span>
<span class="t" style="left:1504.60px;top:825.00px;font-size:15.00px;line-height:15.00px;color:#111;transform:scaleX(0.8750);">Temp at Start</span>
<span class="t" style="left:1605.20px;top:825.00px;font-size:15.00px;line-height:15.00px;color:#111;transform:scaleX(0.8750);">Status</span>
<div class="a" style="left:1193.00px;top:848.80px;width:21.00px;height:26.70px;background:#f1f1f1;"></div>
<div class="a" style="left:1193.00px;top:849.00px;width:21.00px;height:1.20px;background:#ebebeb;"></div>
<div class="a" style="left:1215.50px;top:850.20px;width:670.00px;height:24.70px;background:#c3cfdf;"></div>
<div class="a" style="left:1215.50px;top:850.20px;width:136.00px;height:24.70px;background:#bdd0f0;"></div>
<div class="a" style="left:1214.20px;top:850.20px;width:1.20px;height:24.70px;background:#4a4a4a;"></div>
<div class="a" style="left:1352.60px;top:850.20px;width:1.10px;height:24.70px;background:#b6c0d1;"></div>
<div class="a" style="left:1496.00px;top:850.20px;width:1.10px;height:24.70px;background:#b6c0d1;"></div>
<div class="a" style="left:1598.00px;top:850.20px;width:1.10px;height:24.70px;background:#b6c0d1;"></div>
<span class="t" style="left:1220.30px;top:854.80px;font-size:15.00px;line-height:15.00px;color:#111;transform:scaleX(0.8730);">1/23/2026 2:48:40 PM</span>
<svg class="a" style="left:1356px;top:855.8px" width="14" height="14" viewBox="0 0 14 14"><path d="M1.8 0.8 L13 6.7 L1.8 12.6 Z" fill="#111"/></svg>
<span class="t" style="left:1374.50px;top:854.80px;font-size:15.00px;line-height:15.00px;color:#111;transform:scaleX(0.8730);">Pause (In Progress)</span>
<span class="t" style="left:1524.89px;top:854.80px;font-size:15.00px;line-height:15.00px;color:#111;transform:scaleX(0.8730);">36.7 °C</span>
<span class="t" style="left:1601.00px;top:854.80px;font-size:15.00px;line-height:15.00px;color:#111;transform:scaleX(0.8730);">Pause - In Progress (00:00:55)</span>
<div class="a" style="left:1193.00px;top:875.50px;width:21.00px;height:26.70px;background:#f1f1f1;"></div>
<div class="a" style="left:1193.00px;top:875.70px;width:21.00px;height:1.20px;background:#ebebeb;"></div>
<div class="a" style="left:1215.50px;top:876.90px;width:670.00px;height:24.70px;background:#fbfbfb;"></div>
<div class="a" style="left:1214.20px;top:876.90px;width:1.20px;height:24.70px;background:#8a8a8a;"></div>
<div class="a" style="left:1352.60px;top:876.90px;width:1.10px;height:24.70px;background:#d2d2d2;"></div>
<div class="a" style="left:1496.00px;top:876.90px;width:1.10px;height:24.70px;background:#d2d2d2;"></div>
<div class="a" style="left:1598.00px;top:876.90px;width:1.10px;height:24.70px;background:#d2d2d2;"></div>
<span class="t" style="left:1220.30px;top:881.70px;font-size:15.00px;line-height:15.00px;color:#333;transform:scaleX(0.8730);">1/23/2026 2:47:09 PM</span>
<span class="t" style="left:1357.00px;top:881.70px;font-size:15.00px;line-height:15.00px;color:#333;transform:scaleX(0.8730);">Purge</span>
<span class="t" style="left:1524.89px;top:881.70px;font-size:15.00px;line-height:15.00px;color:#333;transform:scaleX(0.8730);">58.3 °C</span>
<span class="t" style="left:1601.00px;top:881.70px;font-size:15.00px;line-height:15.00px;color:#333;transform:scaleX(0.8730);">Purge - Duration: 00:01:30</span>
<div class="a" style="left:1193.00px;top:902.20px;width:21.00px;height:26.70px;background:#f1f1f1;"></div>
<div class="a" style="left:1193.00px;top:902.40px;width:21.00px;height:1.20px;background:#ebebeb;"></div>
<div class="a" style="left:1215.50px;top:903.60px;width:670.00px;height:24.70px;background:#f0f0f0;"></div>
<div class="a" style="left:1214.20px;top:903.60px;width:1.20px;height:24.70px;background:#8a8a8a;"></div>
<div class="a" style="left:1352.60px;top:903.60px;width:1.10px;height:24.70px;background:#d2d2d2;"></div>
<div class="a" style="left:1496.00px;top:903.60px;width:1.10px;height:24.70px;background:#d2d2d2;"></div>
<div class="a" style="left:1598.00px;top:903.60px;width:1.10px;height:24.70px;background:#d2d2d2;"></div>
<span class="t" style="left:1220.30px;top:908.60px;font-size:15.00px;line-height:15.00px;color:#333;transform:scaleX(0.8730);">1/23/2026 2:46:59 PM</span>
<span class="t" style="left:1357.00px;top:908.60px;font-size:15.00px;line-height:15.00px;color:#333;transform:scaleX(0.8730);">Drain</span>
<span class="t" style="left:1524.89px;top:908.60px;font-size:15.00px;line-height:15.00px;color:#333;transform:scaleX(0.8730);">58.8 °C</span>
<span class="t" style="left:1601.00px;top:908.60px;font-size:15.00px;line-height:15.00px;color:#333;transform:scaleX(0.8730);">Drain - Duration: 00:00:09</span>
<div class="a" style="left:1193.00px;top:928.90px;width:21.00px;height:26.70px;background:#f1f1f1;"></div>
<div class="a" style="left:1193.00px;top:929.10px;width:21.00px;height:1.20px;background:#ebebeb;"></div>
<div class="a" style="left:1215.50px;top:930.30px;width:670.00px;height:24.70px;background:#fbfbfb;"></div>
<div class="a" style="left:1214.20px;top:930.30px;width:1.20px;height:24.70px;background:#8a8a8a;"></div>
<div class="a" style="left:1352.60px;top:930.30px;width:1.10px;height:24.70px;background:#d2d2d2;"></div>
<div class="a" style="left:1496.00px;top:930.30px;width:1.10px;height:24.70px;background:#d2d2d2;"></div>
<div class="a" style="left:1598.00px;top:930.30px;width:1.10px;height:24.70px;background:#d2d2d2;"></div>
<span class="t" style="left:1220.30px;top:935.50px;font-size:15.00px;line-height:15.00px;color:#333;transform:scaleX(0.8730);">1/23/2026 2:46:19 PM</span>
<span class="t" style="left:1357.00px;top:935.50px;font-size:15.00px;line-height:15.00px;color:#333;transform:scaleX(0.8730);">Circulation</span>
<span class="t" style="left:1524.89px;top:935.50px;font-size:15.00px;line-height:15.00px;color:#333;transform:scaleX(0.8730);">37.7 °C</span>
<span class="t" style="left:1601.00px;top:935.50px;font-size:15.00px;line-height:15.00px;color:#333;transform:scaleX(0.8730);">Circulation - Duration: 00:00:40</span>
<div class="a" style="left:1193.00px;top:955.60px;width:21.00px;height:26.70px;background:#f1f1f1;"></div>
<div class="a" style="left:1193.00px;top:955.80px;width:21.00px;height:1.20px;background:#ebebeb;"></div>
<div class="a" style="left:1215.50px;top:957.00px;width:670.00px;height:24.70px;background:#f0f0f0;"></div>
<div class="a" style="left:1214.20px;top:957.00px;width:1.20px;height:24.70px;background:#8a8a8a;"></div>
<div class="a" style="left:1352.60px;top:957.00px;width:1.10px;height:24.70px;background:#d2d2d2;"></div>
<div class="a" style="left:1496.00px;top:957.00px;width:1.10px;height:24.70px;background:#d2d2d2;"></div>
<div class="a" style="left:1598.00px;top:957.00px;width:1.10px;height:24.70px;background:#d2d2d2;"></div>
<span class="t" style="left:1220.30px;top:962.40px;font-size:15.00px;line-height:15.00px;color:#333;transform:scaleX(0.8730);">1/23/2026 2:45:59 PM</span>
<span class="t" style="left:1357.00px;top:962.40px;font-size:15.00px;line-height:15.00px;color:#333;transform:scaleX(0.8730);">Fill</span>
<span class="t" style="left:1524.89px;top:962.40px;font-size:15.00px;line-height:15.00px;color:#333;transform:scaleX(0.8730);">38.5 °C</span>
<span class="t" style="left:1601.00px;top:962.40px;font-size:15.00px;line-height:15.00px;color:#333;transform:scaleX(0.8730);">Fill - Duration: 00:00:19</span>
<svg class="a" style="left:1198px;top:857px" width="10" height="12" viewBox="0 0 10 12"><path d="M4.2 3.2 L7.5 6 L4.2 8.8 Z" fill="#1a1a1a"/></svg>
<div class="a" style="left:1886.40px;top:814.50px;width:17.80px;height:161.50px;background:#f6f4f4;"></div>
<div class="a" style="left:1890.40px;top:832.40px;width:7.40px;height:26.00px;background:#c9c9c9;"></div>
<svg class="a" style="left:1887px;top:816px" width="16" height="160" viewBox="0 0 16 160"><path d="M4 8.6 L7.6 5 L11.2 8.6 Z M4 154.6 L7.6 158.2 L11.2 154.6 Z" fill="#c2c2c2"/></svg>
</div></body></html>
